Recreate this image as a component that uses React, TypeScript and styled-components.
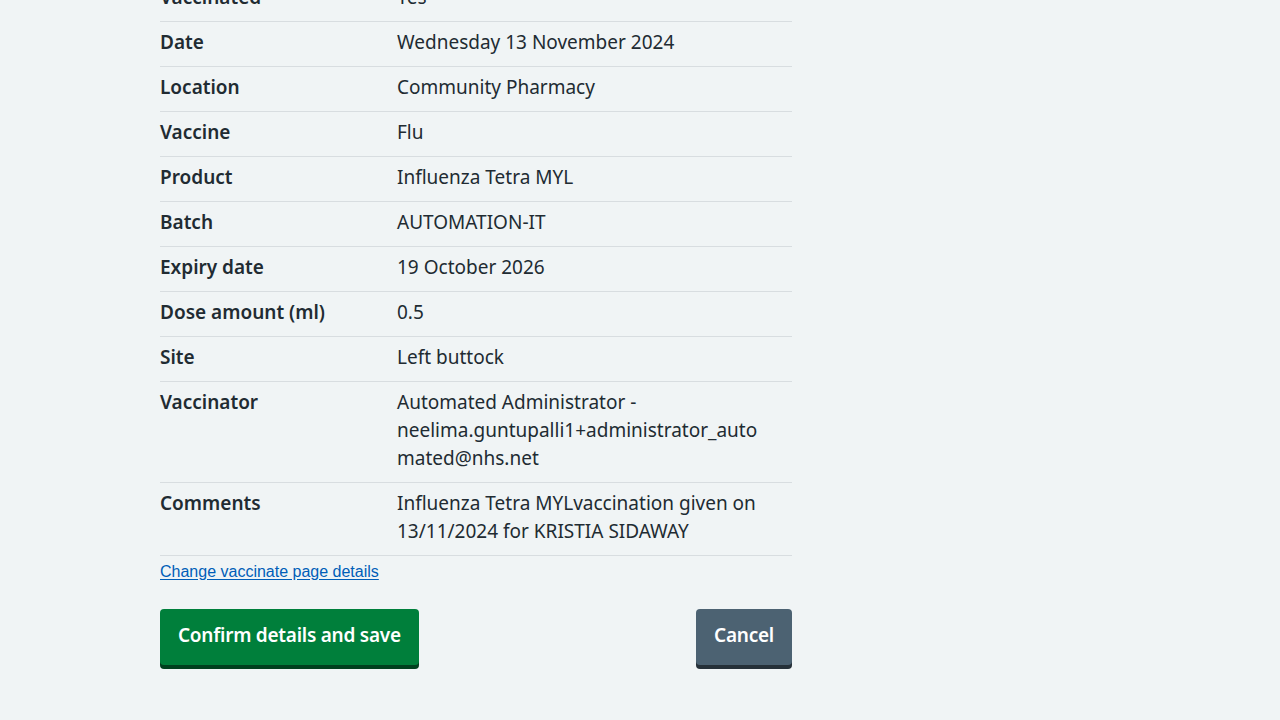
import React from "react";
import styled, { createGlobalStyle } from "styled-components";

const Global = createGlobalStyle`
  html, body { margin: 0; padding: 0; background: #f0f4f5; }
  body { font-family: "Noto Sans", "Open Sans", sans-serif; color: #212b32; }
`;

const Page = styled.main`
  width: 632px;
  margin: -23px 0 0 160px;
  padding-bottom: 40px;
`;

const List = styled.dl`
  margin: 0;
  padding: 0;
`;

const Row = styled.div`
  display: grid;
  grid-template-columns: 237px 1fr;
  border-bottom: 1px solid #d8dde0;
`;

const Key = styled.dt`
  margin: 0;
  padding: 6px 24px 10px 0;
  font-weight: 600;
  font-size: 19px;
  line-height: 28px;
`;

const Value = styled.dd`
  margin: 0;
  padding: 6px 24px 10px 0;
  font-size: 19px;
  line-height: 28px;
  overflow-wrap: anywhere;
`;

const ChangeLink = styled.a`
  display: inline-block;
  margin-top: 6px;
  font-family: "Liberation Sans", Arial, sans-serif;
  font-size: 16px;
  line-height: 20px;
  color: #005eb8;
  text-decoration: underline;
  text-underline-offset: 2px;
`;

const Actions = styled.div`
  display: flex;
  justify-content: space-between;
  margin-top: 27px;
`;

const Button = styled.button<{ $variant?: "primary" | "secondary" }>`
  font-family: "Noto Sans", "Open Sans", sans-serif;
  font-weight: 600;
  font-size: 19px;
  line-height: 28px;
  letter-spacing: -0.25px;
  color: #fff;
  border: 2px solid transparent;
  border-radius: 4px;
  padding: 10px 16px 14px;
  cursor: pointer;
  background: ${(p) => (p.$variant === "secondary" ? "#4c6272" : "#007f3b")};
  box-shadow: 0 4px 0 ${(p) => (p.$variant === "secondary" ? "#263139" : "#00401e")};
`;

const rows: [string, React.ReactNode][] = [
  ["Vaccinated", "Yes"],
  ["Date", "Wednesday 13 November 2024"],
  ["Location", "Community Pharmacy"],
  ["Vaccine", "Flu"],
  ["Product", "Influenza Tetra MYL"],
  ["Batch", "AUTOMATION-IT"],
  ["Expiry date", "19 October 2026"],
  ["Dose amount (ml)", "0.5"],
  ["Site", "Left buttock"],
  [
    "Vaccinator",
    <>
      Automated Administrator -<br />
      neelima.guntupalli1+administrator_automated@nhs.net
    </>,
  ],
  ["Comments", "Influenza Tetra MYLvaccination given on 13/11/2024 for KRISTIA SIDAWAY"],
];

export default function App() {
  return (
    <>
      <Global />
      <Page>
        <List>
          {rows.map(([k, v]) => (
            <Row key={k}>
              <Key>{k}</Key>
              <Value>{v}</Value>
            </Row>
          ))}
        </List>
        <ChangeLink href="#">Change vaccinate page details</ChangeLink>
        <Actions>
          <Button>Confirm details and save</Button>
          <Button $variant="secondary">Cancel</Button>
        </Actions>
      </Page>
    </>
  );
}
